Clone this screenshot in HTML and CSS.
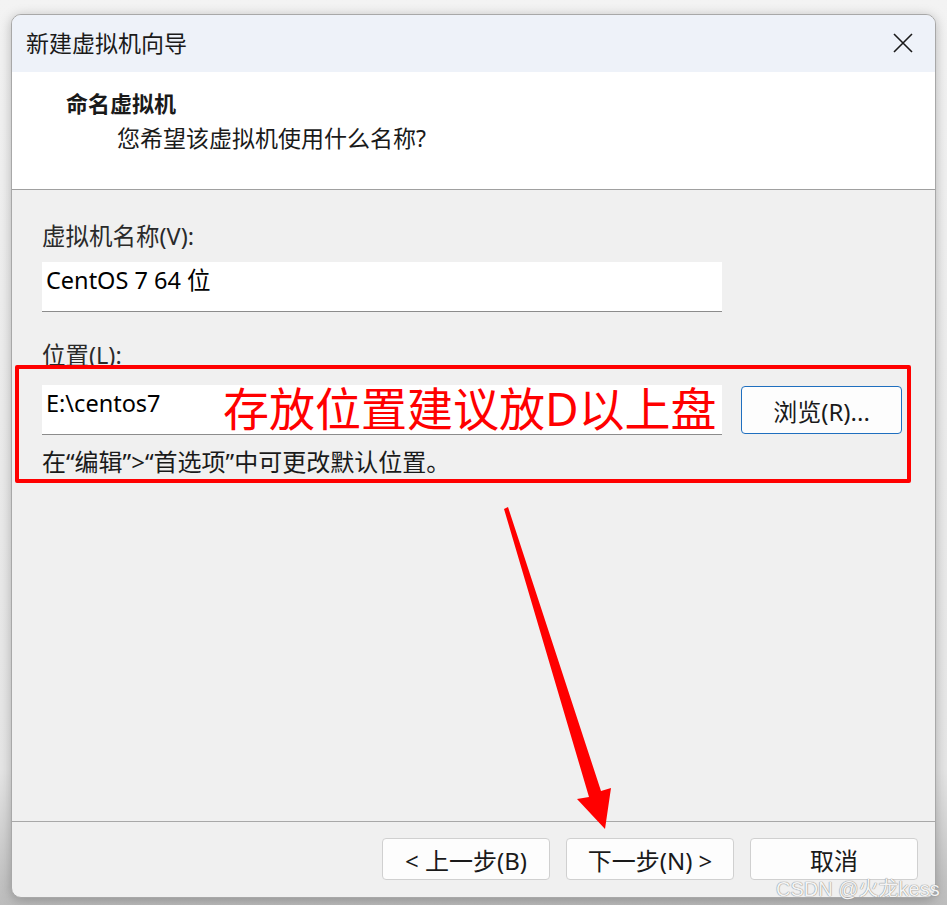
FILE: index.html
```html
<!DOCTYPE html>
<html lang="zh-CN">
<head>
    <meta charset="UTF-8" />
    <title>新建虚拟机向导</title>
    <link rel="stylesheet" href="styles.css">
</head>
<body>
    <div class="window">
        <div class="titlebar">
            <span class="title">新建虚拟机向导</span>
            <svg class="close" width="20" height="20" viewBox="0 0 20 20">
                <path d="M1 1 L19 19 M19 1 L1 19" stroke="#1a1a1a" stroke-width="1.6" fill="none" />
            </svg>
        </div>

        <div class="header">
            <div class="heading">命名虚拟机</div>
            <div class="subheading">您希望该虚拟机使用什么名称?</div>
        </div>

        <div class="content">
            <div class="label label-name">虚拟机名称(V):</div>
            <div class="textbox">CentOS 7 64 位</div>

            <div class="label label-loc">位置(L):</div>
            <div class="path-row">
                <div class="textbox">E:\centos7</div>
                <button class="btn btn-default">浏览(R)...</button>
            </div>
            <div class="hint">在“编辑”&gt;“首选项”中可更改默认位置。</div>
        </div>

        <div class="footer">
            <button class="btn">&lt; 上一步(B)</button>
            <button class="btn">下一步(N) &gt;</button>
            <button class="btn">取消</button>
        </div>
    </div>

    <!-- annotations drawn on top of the screenshot -->
    <div class="note-box"></div>
    <div class="note-text">存放位置建议放D以上盘</div>
    <svg class="note-arrow" width="947" height="905" viewBox="0 0 947 905">
        <polygon points="504,509 508,507 601,791 611,788 605,829 577,799 589,797" fill="#ff0000" />
    </svg>
    <div class="watermark">CSDN @火龙kess</div>
</body>
</html>
```

FILE: styles.css
```css
body {
    margin: 0;
    width: 947px;
    height: 905px;
    overflow: hidden;
    background: linear-gradient(#f3f3f3, #e6e6e6 85%, #bcbcbc);
    font-family: "Noto Sans", "Noto Sans CJK SC", sans-serif;
    color: #1a1a1a;
    position: relative;
}

.window {
    position: absolute;
    left: 11px;
    top: 14px;
    width: 923px;
    height: 882px;
    border: 1px solid #a8a8a8;
    border-radius: 10px;
    overflow: hidden;
    background: #f0f0f0;
    box-shadow: 0 2px 12px rgba(0, 0, 0, 0.25);
    display: flex;
    flex-direction: column;
}

.titlebar {
    height: 57px;
    background-color: #eef2f9;
    display: flex;
    align-items: center;
    justify-content: space-between;
    padding: 0 22px 0 14px;
    flex-shrink: 0;
}

.title {
    font-size: 23px;
    margin-top: -3px;
}

.close {
    margin-top: -2px;
}

.header {
    height: 118px;
    background: #ffffff;
    border-bottom: 1px solid #a0a0a0;
    flex-shrink: 0;
    box-sizing: border-box;
}

.heading {
    font-size: 22px;
    font-weight: bold;
    line-height: 30px;
    margin: 16px 0 0 54px;
}

.subheading {
    font-size: 23px;
    line-height: 30px;
    margin: 5px 0 0 105px;
}

.content {
    flex: 1;
    padding: 0 0 0 30px;
}

.label {
    font-size: 23.5px;
    line-height: 30px;
    color: #2a2a2a;
}

.label-name {
    margin-top: 31px;
}

.label-loc {
    margin-top: 28px;
}

.textbox {
    width: 680px;
    height: 50px;
    box-sizing: border-box;
    background: #ffffff;
    border-bottom: 1px solid #8c8c8c;
    padding: 3px 4px;
    font-size: 23.5px;
    line-height: 30px;
    color: #000;
}

.label-name + .textbox {
    margin-top: 11px;
}

.path-row {
    display: flex;
    align-items: center;
    gap: 19px;
    margin-top: 15px;
}

.btn {
    font-family: inherit;
    font-size: 24px;
    color: #1a1a1a;
    background: #fdfdfd;
    border: 1px solid #d0d0d0;
    border-radius: 4px;
    width: 168px;
    height: 42px;
    padding: 0;
}

.btn-default {
    width: 161px;
    height: 48px;
    border-color: #1f6fbf;
}

.hint {
    font-size: 24px;
    line-height: 30px;
    margin-top: 12px;
}

.footer {
    height: 76px;
    flex-shrink: 0;
    border-top: 1px solid #a8a8a8;
    display: flex;
    justify-content: flex-end;
    gap: 16px;
    padding: 16px 17px 0 0;
    box-sizing: border-box;
}

.note-box {
    position: absolute;
    left: 15px;
    top: 365px;
    width: 888px;
    height: 110px;
    border: 4px solid #ff0000;
    border-radius: 2px;
}

.note-text {
    position: absolute;
    left: 223px;
    top: 378px;
    font-size: 46px;
    line-height: 60px;
    color: #ff0000;
    white-space: nowrap;
}

.note-arrow {
    position: absolute;
    left: 0;
    top: 0;
}

.watermark {
    position: absolute;
    left: 776px;
    top: 873px;
    font-family: "Liberation Sans", "Noto Sans CJK SC", sans-serif;
    font-size: 20px;
    color: #f4f4f4;
    text-shadow: 0 0 1px #888, 0 0 1px #888;
}
```
